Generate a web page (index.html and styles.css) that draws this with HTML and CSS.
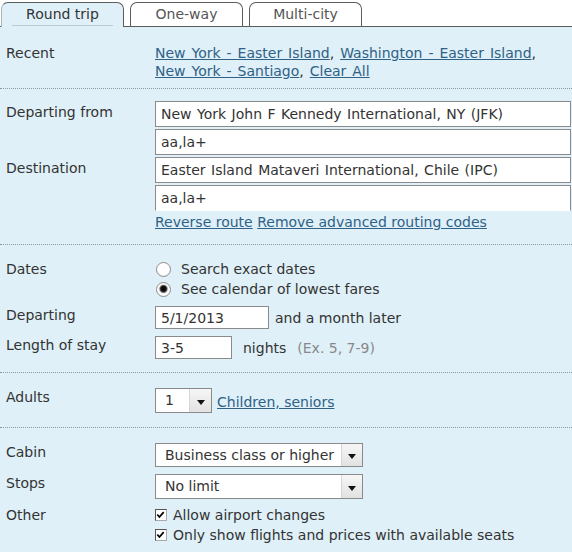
FILE: index.html
```html
<!DOCTYPE html>
<html>
<head>
<meta charset="utf-8">
<link rel="stylesheet" href="styles.css">
</head>
<body>
<div class="tabs">
  <div class="tab tab-active">Round trip</div>
  <div class="tab">One-way</div>
  <div class="tab tab-last">Multi-city</div>
</div>
<div class="panel">
  <section class="sec sec-recent">
    <div class="row">
      <div class="label">Recent</div>
      <div class="field recent">
        <a href="#">New York - Easter Island</a>, <a href="#">Washington - Easter Island</a>,<br>
        <a href="#">New York - Santiago</a>, <a href="#">Clear All</a>
      </div>
    </div>
  </section>

  <section class="sec sec-route">
    <div class="row">
      <div class="label label-route">Departing from</div>
      <div class="field stack">
        <div class="textbox wide">New York John F Kennedy International, NY (JFK)</div>
        <div class="textbox wide">aa,la+</div>
      </div>
    </div>
    <div class="row row-gap2">
      <div class="label label-route">Destination</div>
      <div class="field stack">
        <div class="textbox wide">Easter Island Mataveri International, Chile (IPC)</div>
        <div class="textbox wide open-bottom">aa,la+</div>
      </div>
    </div>
    <div class="row row-links">
      <div class="label"></div>
      <div class="field"><a href="#">Reverse route</a> <a href="#">Remove advanced routing codes</a></div>
    </div>
  </section>

  <section class="sec sec-dates">
    <div class="row">
      <div class="label label-radio">Dates</div>
      <div class="field">
        <div class="opt"><span class="radio"></span>Search exact dates</div>
        <div class="opt"><span class="radio radio-on"></span>See calendar of lowest fares</div>
      </div>
    </div>
    <div class="row row-date">
      <div class="label">Departing</div>
      <div class="field inline">
        <div class="textbox small date">5/1/2013</div>
        <span class="after">and a month later</span>
      </div>
    </div>
    <div class="row row-date">
      <div class="label">Length of stay</div>
      <div class="field inline">
        <div class="textbox small stay">3-5</div>
        <span class="after after-nights">nights</span>
        <span class="hint">(Ex. 5, 7-9)</span>
      </div>
    </div>
  </section>

  <section class="sec sec-adults">
    <div class="row">
      <div class="label">Adults</div>
      <div class="field inline">
        <div class="select sel-adults"><span class="sel-text">1</span><span class="sel-arrow"></span></div>
        <a href="#" class="after-link">Children, seniors</a>
      </div>
    </div>
  </section>

  <section class="sec sec-cabin">
    <div class="row">
      <div class="label">Cabin</div>
      <div class="field">
        <div class="select sel-wide sel-cabin"><span class="sel-text">Business class or higher</span><span class="sel-arrow"></span></div>
      </div>
    </div>
    <div class="row row-stops">
      <div class="label">Stops</div>
      <div class="field">
        <div class="select sel-wide sel-stops"><span class="sel-text">No limit</span><span class="sel-arrow"></span></div>
      </div>
    </div>
    <div class="row row-other">
      <div class="label label-check">Other</div>
      <div class="field">
        <div class="opt"><span class="check"><svg viewBox="0 0 12 12" width="12" height="12"><path d="M2.5 5.5 L4.8 8.2 L9.5 2.8" fill="none" stroke="#000" stroke-width="1.9"/></svg></span>Allow airport changes</div>
        <div class="opt"><span class="check"><svg viewBox="0 0 12 12" width="12" height="12"><path d="M2.5 5.5 L4.8 8.2 L9.5 2.8" fill="none" stroke="#000" stroke-width="1.9"/></svg></span>Only show flights and prices with available seats</div>
      </div>
    </div>
  </section>
</div>
</body>
</html>
```

FILE: styles.css
```css
html, body {
  margin: 0;
  padding: 0;
}
body {
  width: 572px;
  height: 552px;
  overflow: hidden;
  background: #fff;
  color: #333;
  font-family: "DejaVu Sans", Verdana, sans-serif;
  font-size: 14px;
  line-height: 18px;
}
a {
  color: #2f6286;
  text-decoration: underline;
}

/* tabs */
.tabs {
  display: flex;
  align-items: flex-end;
  gap: 6px;
  height: 27px;
  box-sizing: border-box;
  padding-left: 1px;
  border-bottom: 1px solid #5c5c5c;
}
.tab {
  box-sizing: border-box;
  width: 113px;
  height: 24px;
  border: 1px solid #5c5c5c;
  border-bottom: none;
  border-radius: 7px 7px 0 0;
  background: #fff;
  color: #555;
  text-align: center;
  line-height: 22px;
}
.tab-active {
  position: relative;
  width: 123px;
  height: 25px;
  margin-bottom: -1px;
  background: #dff0f8;
  color: #333;
  border-left-color: #a9b5bb;
}
.tab-active::after {
  content: "";
  position: absolute;
  left: 10px;
  right: 10px;
  bottom: 1px;
  height: 1px;
  background: #bcc9cf;
}

/* panel */
.panel {
  background: #dff0f8;
  height: 525px;
}
.sec {
  padding-left: 6px;
  border-bottom: 1px dotted #8e9a9f;
}
.sec:last-child {
  border-bottom: none;
}
.row {
  display: flex;
  align-items: flex-start;
}
.label {
  width: 149px;
  flex: none;
}
.field {
  flex: 1;
}
.inline {
  display: flex;
  align-items: center;
}

/* recent */
.sec-recent {
  padding-top: 17px;
  padding-bottom: 8px;
}
.recent {
  word-spacing: 1.5px;
}

/* route */
.sec-route {
  padding-top: 12px;
  padding-bottom: 13px;
}
.stack {
  display: flex;
  flex-direction: column;
  gap: 2px;
}
.row-gap2 {
  margin-top: 2px;
}
.label-route {
  padding-top: 2px;
}
.row-links {
  margin-top: 2px;
}
.textbox {
  box-sizing: border-box;
  background: #fff;
  border: 1px solid #8a8a8a;
  padding-left: 5px;
  color: #333;
  white-space: nowrap;
  overflow: hidden;
}
.wide {
  width: 416px;
  height: 26px;
  line-height: 24px;
  word-spacing: 1px;
}
.open-bottom {
  border-bottom-color: #fff;
}

/* dates */
.sec-dates {
  padding-top: 14px;
  padding-bottom: 13px;
}
.opt {
  display: flex;
  align-items: center;
  height: 20px;
}
.label-radio {
  padding-top: 1px;
}
.radio {
  box-sizing: border-box;
  width: 15px;
  height: 15px;
  margin-left: 1px;
  margin-right: 10px;
  border-radius: 50%;
  border: 1px solid #8d8d8d;
  background: radial-gradient(circle at 50% 35%, #fff 0%, #fff 55%, #e8e8e8 100%);
  flex: none;
}
.radio-on {
  background: radial-gradient(circle at 50% 45%, #000 0px, #111 2.5px, #666 3.6px, #eee 4.5px, #fff 6px, #dcdcdc 100%);
}
.row-date {
  margin-top: 7px;
}
.small {
  height: 23px;
  line-height: 22px;
}
.date {
  width: 114px;
}
.stay {
  width: 77px;
}
.after {
  margin-left: 6px;
}
.after-nights {
  margin-left: 11px;
}
.hint {
  margin-left: 11px;
  color: #888;
}

/* adults */
.sec-adults {
  padding-top: 15px;
  padding-bottom: 14px;
}
.select {
  box-sizing: border-box;
  display: flex;
  align-items: stretch;
  background: #fff;
  border: 1px solid #8a8a8a;
  color: #333;
}
.sel-text {
  flex: 1;
  padding-left: 9px;
  white-space: nowrap;
}
.sel-arrow {
  position: relative;
  flex: none;
  width: 20px;
  border-left: 1px solid #d6d6d6;
  background: linear-gradient(#f6f6f6, #e2e2e2);
}
.sel-arrow::after {
  content: "";
  position: absolute;
  left: 50%;
  top: 50%;
  margin-left: -4px;
  margin-top: -1px;
  border-left: 4px solid transparent;
  border-right: 4px solid transparent;
  border-top: 5px solid #111;
}
.sel-adults {
  width: 57px;
  height: 25px;
  line-height: 23px;
}
.sel-adults .sel-arrow {
  width: 21px;
}
.after-link {
  margin-left: 5px;
  margin-top: 3px;
}

/* cabin */
.sec-cabin {
  padding-top: 15px;
}
.sel-wide {
  width: 208px;
}
.sel-cabin {
  height: 24px;
  line-height: 22px;
}
.sel-stops {
  height: 25px;
  line-height: 23px;
}
.row-stops {
  margin-top: 7px;
}
.row-other {
  margin-top: 6px;
}
.label-check {
  padding-top: 1px;
}
.check {
  box-sizing: border-box;
  display: flex;
  width: 12px;
  height: 12px;
  margin-right: 6px;
  border: 1px solid #555;
  border-right-color: #aaa;
  border-bottom-color: #aaa;
  background: #fff;
  flex: none;
  overflow: hidden;
}
.check svg {
  display: block;
  margin: -1px 0 0 -1px;
}
```
